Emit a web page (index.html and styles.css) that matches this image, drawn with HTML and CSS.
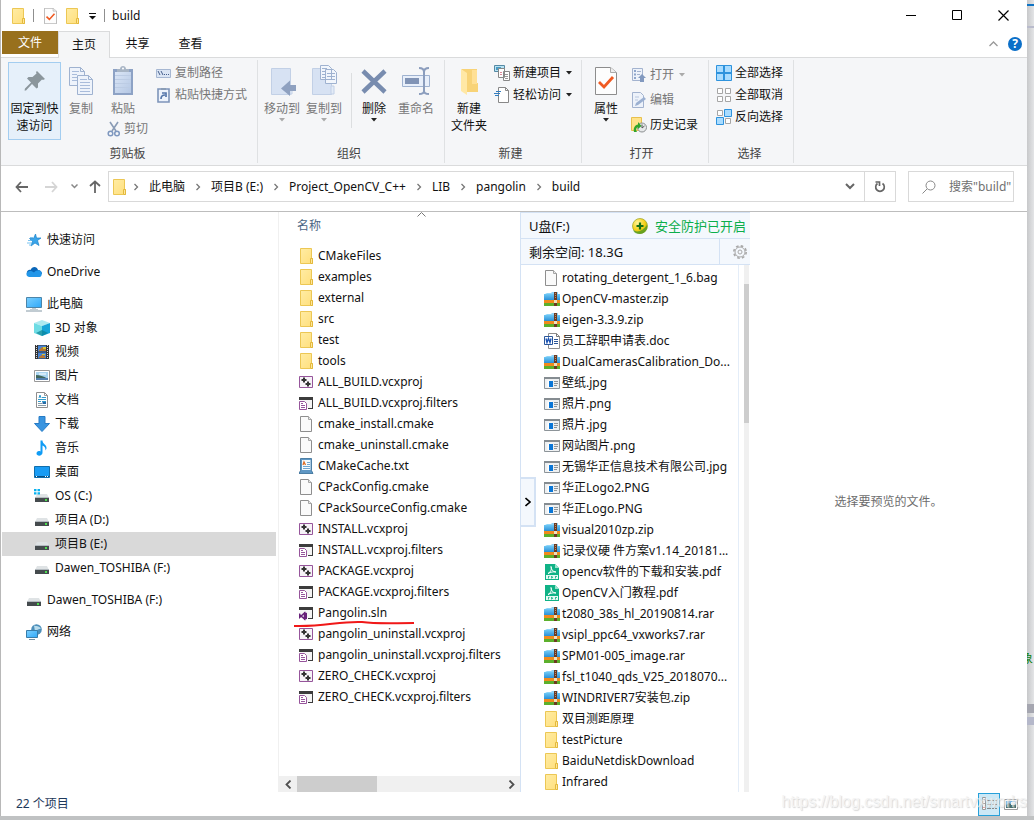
FILE: index.html
```
<!DOCTYPE html>
<html lang="zh-CN">
<head>
<meta charset="utf-8">
<title>build</title>
<link rel="stylesheet" href="styles.css">
</head>
<body>
<svg class="sprite" aria-hidden="true">
  <defs>
    <linearGradient id="g-folder" x1="0" y1="0" x2="1" y2="1"><stop offset="0" stop-color="#ffeca4"/><stop offset="1" stop-color="#ffdf7c"/></linearGradient>
    <linearGradient id="g-screen" x1="0" y1="0" x2="1" y2="1"><stop offset="0" stop-color="#7cd0ff"/><stop offset="1" stop-color="#2fa8f8"/></linearGradient>
    <linearGradient id="g-board" x1="0" y1="0" x2="1" y2="1"><stop offset="0" stop-color="#dbe6f6"/><stop offset="1" stop-color="#b4c7e4"/></linearGradient>
    <linearGradient id="g-zip" x1="0" y1="0" x2="0" y2="1"><stop offset="0" stop-color="#6ec8f5"/><stop offset="1" stop-color="#1f86d2"/></linearGradient>
    <radialGradient id="g-gold" cx=".35" cy=".3" r=".8"><stop offset="0" stop-color="#fff59a"/><stop offset=".6" stop-color="#f5cf14"/><stop offset="1" stop-color="#8fa817"/></radialGradient>
  </defs>
  <symbol id="folder" viewBox="0 0 16 16"><path d="M1.500.5h11v10h1v5h-12z" fill="url(#g-folder)" stroke="#ecc754"/><path d="M11.500 15v-4.500h2v5h-2" fill="#ffe69a" stroke="#e3b93c"/></symbol>
  <symbol id="page" viewBox="0 0 16 16"><path d="M1.500.5h8l3 3v12h-11z" fill="#fafafa" stroke="#8e8e8e"/><path d="M9.500.5v3h3" fill="#e8e8e8" stroke="#a5a5a5"/></symbol>
  <symbol id="proj" viewBox="0 0 16 16"><path d="M.5 2.500h13v11H.5z" fill="#f6f2f7" stroke="#96559b"/><path d="M5 3.500v5M2.500 6h5M9 7.500v5M6.500 10h5" stroke="#333" stroke-width="2"/></symbol>
  <symbol id="filters" viewBox="0 0 16 16"><path d="M0 2h14v12H9v-1h4V5H0z" fill="#3c3c3c"/><path d="M1 5h12v8H1z" fill="#f4f4f4"/><path d="M.5 6.500h5l2 2v6h-7z" fill="#fff" stroke="#96559b"/><path d="M2 10.500h4M2 12.500h4M2 8.500h2" stroke="#96559b"/></symbol>
  <symbol id="sln" viewBox="0 0 16 16"><path d="M0 2h14v12H9v-1h4V5H0z" fill="#3c3c3c"/><path d="M1 5h12v8H1z" fill="#f4f4f4"/><path d="M.5 8.500v4L5.500 8v6l-5-4.500" fill="none" stroke="#68217a" stroke-width="1.500"/><path d="M5 7l3 1v6l-3 1z" fill="#68217a"/></symbol>
  <symbol id="txt" viewBox="0 0 16 16"><path d="M1.500.500h11v12l1.500 3H0l1.500-3z" fill="#5f97c4" stroke="#346b96" stroke-width=".8"/><path d="M3 2h8.500v10H3z" fill="#f5fbff"/><path d="M4 7l1-3 1.500 3" fill="none" stroke="#e06c24" stroke-width="1.300"/><path d="M8 4.500h3M8 6.500h3M4 8.500h7M4 10.500h7" stroke="#72a7d1"/></symbol>
  <symbol id="zip" viewBox="0 0 16 16"><path d="M1 3l2-1h4l1-1h6v4H1z" fill="#8fd4f8"/><path d="M0 3h16v7H0z" fill="url(#g-zip)"/><path d="M0 9h16v3H0z" fill="#f08a1c"/><path d="M0 12h16v3H0z" fill="#5cb02c"/><path d="M10 1h3v14h-3z" fill="#6b3a22"/><path d="M11.500 2v6" stroke="#b98f6f" stroke-dasharray="1 1"/><path d="M10 9h3v3h-3z" fill="#efe0bc"/></symbol>
  <symbol id="doc" viewBox="0 0 16 16"><path d="M4.500.5h8l3 3v12h-11z" fill="#fff" stroke="#8e8e8e"/><path d="M12.500.5v3h3" fill="none" stroke="#777"/><path d="M10 6.500h4M10 8.500h4M10 10.500h4" stroke="#2b579a"/><path d="M.5 3.500h8v8h-8z" fill="#fff" stroke="#2b579a"/><path d="M2 5.500l1 4 1.500-4 1.500 4 1-4" fill="none" stroke="#1d55b4" stroke-width="1.400"/></symbol>
  <symbol id="img" viewBox="0 0 16 16"><path d="M.5 2.500h15v11H.5z" fill="#eef0f1" stroke="#8d9499"/><path d="M0 2h16v2H0z" fill="#858c91"/><path d="M3.500 5.500h5v7h-5z" fill="#fff"/><path d="M5 6h4v6H5z" fill="#0a76d6"/><path d="M10 6.500h4M10 8.500h4M10 10.500h3" stroke="#8d9499"/></symbol>
  <symbol id="pdf" viewBox="0 0 16 16"><path d="M1 0h10l4 4v12H1z" fill="#10b286"/><path d="M11 0v4h4z" fill="#9be3cd"/><path d="M4 9.500c3-1.500 4-5 3-7 0 3 2 5.500 5 5.500-3-.5-5 0-8 1.500z" fill="none" stroke="#fff"/><path d="M2 11h12v4H2z" fill="#e6f8f2"/><path d="M4.500 12v2.500M4 12.500h1.500M7.500 12v2.500M8.500 12.500v1.500M11.500 12v2.500M11 12.500h2" stroke="#3bbd98"/></symbol>
  <symbol id="star" viewBox="0 0 16 16"><path d="M9.500 2l1 4H15l-3.500 2.500L13 13.500 9 11l-4 3 1.500-4.500L3.500 6.500h4z" fill="#3aa5ea" stroke="#1a82ca" stroke-width=".7"/><path d="M4 5.500h3M2 8.500h4M1 11h5M3 13h3" stroke="#59b5ee" stroke-width=".8"/></symbol>
  <symbol id="cloud" viewBox="0 0 16 16"><path d="M2 12C-1 9 2 5 4.500 6 6 2 11 2 12 6c2 0 4 1.500 4 4z" fill="#0a66b8"/><path d="M3 13c-3-.5-3.500-4-.5-5.500 2-1 4 0 5.500 1 1.500-1.500 3.500-2.500 5.500-2 3 1 3 6 0 6.500z" fill="#2296e8"/></symbol>
  <symbol id="pc" viewBox="0 0 16 16"><path d="M.5 1.500h15v10H.5z" fill="url(#g-screen)" stroke="#4c85a9"/><path d="M6 12.500h4M4 13.500h8" stroke="#c2ccd2"/><path d="M0 15h16" stroke="#8398a5"/></symbol>
  <symbol id="cube" viewBox="0 0 16 16"><path d="M0 3l8-3 8 3-8 3z" fill="#aeeaf0"/><path d="M0 3l8 3v10l-8-3z" fill="#6edce4"/><path d="M16 3L8 6v10l8-3z" fill="#18a5d8"/><path d="M2 13l6-3 6 3-6 3z" fill="#0a8396" opacity=".7"/></symbol>
  <symbol id="film" viewBox="0 0 16 16"><path d="M1 1h14v14H1z" fill="#333"/><path d="M4 1.500h8v6H4zM4 8.500h8v6H4z" fill="#4784d3"/><path d="M5 6l3-3 4 2v2H5zM5 13l3-2 3 1v2H5z" fill="#bb772f"/><path d="M9 3h3v2H9zM8 10h3v1H8z" fill="#dbc52d"/><path d="M2.500 1v14M13.500 1v14" stroke="#ddd" stroke-dasharray="1 1"/></symbol>
  <symbol id="photo" viewBox="0 0 16 16"><path d="M.5 2.500h15v11H.5z" fill="#fff" stroke="#999"/><path d="M2 4h12v8H2z" fill="#a9d4ef"/><path d="M2 7c4 0 7 1 12 4v1H2z" fill="#40675c"/><path d="M2 10h12v2H2z" fill="#537fae"/><path d="M5 6h7" stroke="#fff"/></symbol>
  <symbol id="document" viewBox="0 0 16 16"><path d="M2.500.5h8l3 3v12h-11z" fill="#fff" stroke="#8e8e8e"/><path d="M10.500.5v3h3" fill="none" stroke="#999"/><path d="M5 6l1-3 1 3M8 5.500h4M4 7.500h8M4 9.500h3M8 9.500h4" fill="none" stroke="#329acb"/><path d="M4 11.500h4M4 13.500h8" stroke="#889ba6"/><path d="M8.500 10h3.500v2H8.500z" fill="#286aa7"/></symbol>
  <symbol id="down" viewBox="0 0 16 16"><path d="M5 .5h6v7h4.500L8 15.500.5 7.500H5z" fill="#3894e0" stroke="#267bc5"/></symbol>
  <symbol id="note" viewBox="0 0 16 16"><path d="M6.500.5h2c0 4 4.500 4 4 8l-1 2c0-3-1-4-3-5v7c0 4-6 4-6 1 0-2 2-3 4-2z" fill="#109cf5"/></symbol>
  <symbol id="desktop" viewBox="0 0 16 16"><path d="M.5 2.500h15v11H.5z" fill="#199cf4" stroke="#106eac"/><path d="M1 12.500h14" stroke="#084f83"/><path d="M2 12.500h1M11 12.500h1M13 12.500h1" stroke="#fff"/></symbol>
  <symbol id="drive" viewBox="0 0 16 16"><path d="M3 6h10l2 4H1z" fill="#dfe3e5"/><path d="M1 10h14v4H1z" fill="#454b4e"/><path d="M1 9.500h14" stroke="#b4bbc0"/><path d="M11 12h2" stroke="#4cde4f" stroke-width="2"/></symbol>
  <symbol id="osdrive" viewBox="0 0 16 16"><use href="#drive"/><path d="M0 1h2.500v2.200H0zM3.500 1H6v2.200H3.500zM0 4.200h2.500v2.200H0zM3.500 4.200H6v2.200H3.500z" fill="#08b1ef"/></symbol>
  <symbol id="network" viewBox="0 0 16 16"><circle cx="10.500" cy="5.500" r="5.300" fill="#4d8fba"/><path d="M8 1.500c2 1 5 0 7 3l-3 1-3 2z" fill="#b8dced"/><path d="M.5 6.500h11v7H.5z" fill="url(#g-screen)" stroke="#387ca9"/><path d="M3 15.500h6" stroke="#7390a3"/></symbol>
  <symbol id="check" viewBox="0 0 22 28"><path d="M.5.5h15l6 5v22H.5z" fill="#fdfdfd" stroke="#8d8d8d"/><path d="M15.500.5v5h6" fill="#eee" stroke="#aaa"/><path d="M4 15l5 5 9-10" fill="none" stroke="#f05a22" stroke-width="2.800"/></symbol>
  <symbol id="arrow-down" viewBox="0 0 8 4"><path d="M1 0h6L4 3.500z" fill="currentColor"/></symbol>
  <symbol id="chev" viewBox="0 0 8 8"><path d="M2.500 1l3 3-3 3" fill="none" stroke="currentColor" stroke-width="1.300"/></symbol>
</svg>

<div class="window">
  <header class="titlebar">
    <svg class="i16"><use href="#folder"/></svg>
    <span class="bar"></span>
    <button class="plain" aria-label="属性"><svg class="i-check"><use href="#check"/></svg></button>
    <button class="plain" aria-label="新建文件夹"><svg class="i16"><use href="#folder"/></svg></button>
    <button class="plain custom" aria-label="自定义快速访问工具栏"><svg width="8" height="8" viewBox="0 0 8 8"><path d="M0 1.500h7" stroke="#111"/><path d="M0 4h7L3.500 7.500z" fill="#111"/></svg></button>
    <span class="bar"></span>
    <h1 class="title">build</h1>
    <div class="winbuttons">
      <button class="plain" aria-label="最小化"><svg width="11" height="11"><path d="M0 5.500h10" stroke="#000"/></svg></button>
      <button class="plain" aria-label="最大化"><svg width="11" height="11"><path d="M.5.5h9v9h-9z" fill="none" stroke="#000"/></svg></button>
      <button class="plain" aria-label="关闭"><svg width="11" height="11"><path d="M.5.5l10 10M10.500.5l-10 10" stroke="#000" stroke-width="1.200"/></svg></button>
    </div>
  </header>

  <nav class="tabs">
    <button class="tab file">文件</button>
    <button class="tab active">主页</button>
    <button class="tab">共享</button>
    <button class="tab">查看</button>
    <div class="tabs-end">
      <button class="plain" aria-label="最小化功能区"><svg width="9" height="6"><path d="M.5 5l4-4 4 4" fill="none" stroke="#999" stroke-width="1.300"/></svg></button>
      <button class="plain help" aria-label="帮助">?</button>
    </div>
  </nav>

  <section class="ribbon">
    <div class="group clip">
      <div class="tools">
        <button class="big pinned"><svg width="24" height="32" viewBox="0 0 24 32"><path d="M14 6l8 8-2 1-1-.500-4 4 0 4-1.500 1-4.500-4.500-6 6.500-1.500 0 .5-2 6-6-4-4 1.500-1.500h4l4-3.500-.5-1.500z" fill="#8b969c"/></svg><span>固定到快<br>速访问</span></button>
        <button class="big copy off"><svg width="26" height="32" viewBox="0 0 26 32"><g fill="#eef3fb" stroke="#9fb2d0"><path d="M1.500 2.500h11l4 4v14h-15z"/><path d="M9.500 10.500h11l4 4v15h-15z"/></g><path d="M12.500 2.500v4h4M20.500 10.500v4h4" fill="none" stroke="#9fb2d0"/><path d="M4 6.500h7M4 9.500h5M4 12.500h5M4 15.500h5M12 14.500h7M12 17.500h10M12 20.500h10M12 23.500h10M12 26.500h10" stroke="#a9bcdb"/></svg><span>复制</span></button>
        <div class="pastecol">
          <button class="big paste off"><svg width="22" height="32" viewBox="0 0 22 32"><path d="M1 4h20v26H1z" fill="#8da2c5"/><path d="M3 7h16v21H3z" fill="url(#g-board)"/><path d="M3 10.500h16M3 14.500h16M3 18.500h16M3 22.500h16" stroke="#bccce4"/><path d="M5 7V4h3c0-4 6-4 6 0h3v3z" fill="#a8b5c5"/><circle cx="11" cy="3.500" r="1" fill="#fff"/></svg><span>粘贴</span></button>
          <button class="small off"><svg class="i16" viewBox="0 0 16 16"><path d="M4 1l6 9M12 1L6 10" stroke="#899bb5" stroke-width="1.600"/><circle cx="4.500" cy="12.500" r="2.300" fill="none" stroke="#7f98bf" stroke-width="1.500"/><circle cx="11" cy="12.500" r="2.300" fill="none" stroke="#7f98bf" stroke-width="1.500"/></svg>剪切</button>
        </div>
        <div class="smalls">
          <button class="small off"><svg class="i16" viewBox="0 0 16 16"><path d="M.5 4.500h14v8H.5z" fill="#dbe5f4" stroke="#a6b7d2"/><path d="M2 6l2 4M5 6l2 4M8 9.500h1M10 9.500h1M12 9.500h1" stroke="#465f8d"/></svg>复制路径</button>
          <button class="small off"><svg class="i16" viewBox="0 0 16 16"><path d="M2 2h11v13H2z" fill="#edf3fc" stroke="#7d94b9" stroke-width="1.600"/><path d="M5 3V1h5v2z" fill="#8b9db6"/><path d="M5 12c0-3 1-4 4-4M6 6h4v4" fill="none" stroke="#5577ab" stroke-width="1.700"/></svg>粘贴快捷方式</button>
        </div>
      </div>
      <h2>剪贴板</h2>
    </div>

    <div class="group organize">
      <div class="tools">
        <button class="big off"><svg width="28" height="32" viewBox="0 0 28 32"><path d="M3.500 3.500h19v26h-19z" fill="#d7e2f3" stroke="#c2d0e6"/><path d="M22 21h2v8h-2z" fill="#e3ebf7" stroke="#c2d0e6"/><path d="M13 23.500l9-8V20h6v6h-6v5z" fill="#8fa1c0"/></svg><span>移动到</span><svg class="dd"><use href="#arrow-down"/></svg></button>
        <button class="big off"><svg width="28" height="32" viewBox="0 0 28 32"><path d="M2.500 3.500h19v26h-19z" fill="#d7e2f3" stroke="#c2d0e6"/><path d="M21 21h3v8h-3z" fill="#e3ebf7" stroke="#c2d0e6"/><path d="M10.500.5h8l3 3v11h-11zM15.500 4.500h8l3 3v11h-11z" fill="#f2f6fc" stroke="#9fb2d0"/><path d="M12 3.500h5M12 6.500h3M12 9.500h3M12 12.500h3M17 8.500h8M17 11.500h8M17 14.500h8" stroke="#9fb2d0"/></svg><span>复制到</span><svg class="dd"><use href="#arrow-down"/></svg></button>
        <span class="divider"></span>
        <button class="big"><svg width="28" height="32" viewBox="0 0 28 32"><path d="M3 6l22 21M25 6L3 27" stroke="#788caf" stroke-width="4.500"/></svg><span>删除</span><svg class="dd"><use href="#arrow-down"/></svg></button>
        <button class="big off"><svg width="30" height="32" viewBox="0 0 30 32"><path d="M1.500 10.500h27v11h-27z" fill="#e8effa" stroke="#9fb2d0"/><path d="M4 13h14v6H4z" fill="#8093b5"/><path d="M18 3c3 0 5 1 5 4v19c0 2-2 3-5 3M28 3c-3 0-5 1-5 4M23 26c0 2 2 3 5 3" fill="none" stroke="#8b9dbd" stroke-width="2"/></svg><span>重命名</span></button>
      </div>
      <h2>组织</h2>
    </div>

    <div class="group create">
      <div class="tools">
        <button class="big newfolder"><svg width="26" height="32" viewBox="0 0 26 32"><path d="M5 4h16v14h1v9H9V8z" fill="#f8d377"/><path d="M5 4l6 4v22l-6-4z" fill="#ffe8a6"/><path d="M16 5h5v14h-5z" fill="#ffe095"/></svg><span>新建<br>文件夹</span></button>
        <div class="smalls">
          <button class="small"><svg class="i16" viewBox="0 0 16 16"><path d="M.5.500h10v6H.5z" fill="#b9e3f3" stroke="#5589a4"/><path d="M2 2h5v3H2z" fill="#4a9cc4"/><path d="M4.500 3.500h6v9h-6zM9.500 6.500h6v9h-6z" fill="#fff" stroke="#888"/><path d="M11 9.500h3M11 11.500h3M11 13.500h3" stroke="#999"/><path d="M6 7.500h2M6 9.500h2" stroke="#d89"/></svg>新建项目<svg class="dd"><use href="#arrow-down"/></svg></button>
          <button class="small"><svg class="i16" viewBox="0 0 16 16"><path d="M4.500.5h7l3 3v12h-10z" fill="#fff" stroke="#888"/><path d="M11.500.5v3h3" fill="none" stroke="#888"/><path d="M0 6.500h6M2 4.500h5M1 8.500h4" stroke="#337dc0"/></svg>轻松访问<svg class="dd"><use href="#arrow-down"/></svg></button>
        </div>
      </div>
      <h2>新建</h2>
    </div>

    <div class="group open">
      <div class="tools">
        <button class="big"><svg width="22" height="32" viewBox="0 0 22 32"><use href="#check" y="2" width="22" height="28"/></svg><span>属性</span><svg class="dd"><use href="#arrow-down"/></svg></button>
        <div class="smalls tall">
          <button class="small off"><svg class="i16" viewBox="0 0 16 16"><path d="M1.500 1.500h10v12h-10z" fill="#edf2fa" stroke="#a3b3cf"/><path d="M3 3h2v2H3zM3 6.500h2v2H3zM3 10h2v2H3z" fill="#8fa6cb"/><path d="M6 4.500h4M6 7.500h3" stroke="#a3b3cf"/><path d="M9 15v-4H7l4-4 4 4h-2v4z" fill="#8299bf"/></svg>打开<svg class="dd"><use href="#arrow-down"/></svg></button>
          <button class="small off"><svg class="i16" viewBox="0 0 16 16"><path d="M1.500.5h8l3 3v12h-11z" fill="#edf2fa" stroke="#a3b3cf"/><path d="M4 14l1-3 8-6 2 2-8 6z" fill="#9bb0d1"/><path d="M4 5h4M4 8h3" stroke="#b8c6dd"/></svg>编辑</button>
          <button class="small"><svg class="i16" viewBox="0 0 16 16"><path d="M.5.500h10v13H.5z" fill="#ffe38a" stroke="#e8c04d"/><circle cx="11" cy="10.500" r="4.500" fill="#e7e9ea" stroke="#8b8f91"/><path d="M11 7.500v3.500l2.500-2" fill="none" stroke="#555"/><path d="M3 15c-1-4 1-7 4-7.500V5l3.500 4L7 12v-2c-2 .5-2.500 3-1 5z" fill="#30a62b"/></svg>历史记录</button>
        </div>
      </div>
      <h2>打开</h2>
    </div>

    <div class="group select">
      <div class="tools">
        <div class="smalls">
          <button class="small"><svg class="i16" viewBox="0 0 16 16"><path d="M.5.500h15v15H.5z" fill="#a9dcff" stroke="#2e93dd"/><path d="M8 0v16M0 8h16" stroke="#2e93dd" stroke-width="2"/></svg>全部选择</button>
          <button class="small"><svg class="i16" viewBox="0 0 16 16"><path d="M1.500 1.500h5v5h-5zM9.500 1.500h5v5h-5zM1.500 9.500h5v5h-5zM9.500 9.500h5v5h-5z" fill="#fff" stroke="#a6a6a6"/></svg>全部取消</button>
          <button class="small"><svg class="i16" viewBox="0 0 16 16"><path d="M1.500 1.500h5v5h-5zM9.500 9.500h5v5h-5z" fill="#fff" stroke="#a6a6a6"/><path d="M8.500.500h7v7h-7zM.5 8.500h7v7h-7z" fill="#a9dcff" stroke="#2e93dd"/></svg>反向选择</button>
        </div>
      </div>
      <h2>选择</h2>
    </div>
  </section>

  <section class="addressrow">
    <button class="plain nav-btn" aria-label="后退"><svg width="13" height="12"><path d="M6 1L1.500 6 6 11M1.500 6H13" fill="none" stroke="#666" stroke-width="1.800"/></svg></button>
    <button class="plain nav-btn" aria-label="前进"><svg width="13" height="12"><path d="M7 1l4.500 5L7 11M11.500 6H0" fill="none" stroke="#d5d5d5" stroke-width="1.800"/></svg></button>
    <button class="plain recent" aria-label="最近位置"><svg width="7" height="5"><path d="M.5.500l3 3 3-3" fill="none" stroke="#888" stroke-width="1.500"/></svg></button>
    <button class="plain up" aria-label="上移"><svg width="12" height="13"><path d="M1 6l5-4.500L11 6M6 1.500V13" fill="none" stroke="#666" stroke-width="1.800"/></svg></button>
    <div class="address">
      <svg class="i16"><use href="#folder"/></svg>
      <ol class="crumbs">
        <li><svg class="chev"><use href="#chev"/></svg><a href="#">此电脑</a></li>
        <li><svg class="chev"><use href="#chev"/></svg><a href="#">项目B (E:)</a></li>
        <li><svg class="chev"><use href="#chev"/></svg><a href="#">Project_OpenCV_C++</a></li>
        <li><svg class="chev"><use href="#chev"/></svg><a href="#">LIB</a></li>
        <li><svg class="chev"><use href="#chev"/></svg><a href="#">pangolin</a></li>
        <li><svg class="chev"><use href="#chev"/></svg><a href="#">build</a></li>
      </ol>
      <button class="plain history" aria-label="以前的位置"><svg width="10" height="7"><path d="M1 1l4 4 4-4" fill="none" stroke="#666" stroke-width="2"/></svg></button>
      <button class="plain refresh" aria-label="刷新"><svg width="12" height="13"><path d="M8.500 3.500a4.300 4.300 0 1 1-5 0M1.500 2h4v4" fill="none" stroke="#666" stroke-width="1.700"/></svg></button>
    </div>
    <label class="search"><svg width="14" height="14"><circle cx="8.500" cy="5.500" r="4.500" fill="none" stroke="#888"/><path d="M5 9l-4.500 4.500" stroke="#888"/></svg><input type="text" placeholder="搜索&quot;build&quot;" aria-label="搜索"></label>
  </section>

  <main class="content">
    <nav class="tree">
      <a href="#"><svg class="i16"><use href="#star"/></svg>快速访问</a>
      <a href="#" class="gap"><svg class="i16"><use href="#cloud"/></svg>OneDrive</a>
      <a href="#" class="gap"><svg class="i16"><use href="#pc"/></svg>此电脑</a>
      <a href="#" class="child"><svg class="i16"><use href="#cube"/></svg>3D 对象</a>
      <a href="#" class="child"><svg class="i16"><use href="#film"/></svg>视频</a>
      <a href="#" class="child"><svg class="i16"><use href="#photo"/></svg>图片</a>
      <a href="#" class="child"><svg class="i16"><use href="#document"/></svg>文档</a>
      <a href="#" class="child"><svg class="i16"><use href="#down"/></svg>下载</a>
      <a href="#" class="child"><svg class="i16"><use href="#note"/></svg>音乐</a>
      <a href="#" class="child"><svg class="i16"><use href="#desktop"/></svg>桌面</a>
      <a href="#" class="child"><svg class="i16"><use href="#osdrive"/></svg>OS (C:)</a>
      <a href="#" class="child"><svg class="i16"><use href="#drive"/></svg>项目A (D:)</a>
      <a href="#" class="child current"><svg class="i16"><use href="#drive"/></svg>项目B (E:)</a>
      <a href="#" class="child"><svg class="i16"><use href="#drive"/></svg>Dawen_TOSHIBA (F:)</a>
      <a href="#" class="gap"><svg class="i16"><use href="#drive"/></svg>Dawen_TOSHIBA (F:)</a>
      <a href="#" class="gap"><svg class="i16"><use href="#network"/></svg>网络</a>
    </nav>

    <section class="files">
      <button class="plain colhead"><svg class="sort" width="9" height="5"><path d="M.5 4.500l4-4 4 4" fill="none" stroke="#777"/></svg>名称</button>
      <ul class="list">
        <li><svg class="i16"><use href="#folder"/></svg>CMakeFiles</li>
        <li><svg class="i16"><use href="#folder"/></svg>examples</li>
        <li><svg class="i16"><use href="#folder"/></svg>external</li>
        <li><svg class="i16"><use href="#folder"/></svg>src</li>
        <li><svg class="i16"><use href="#folder"/></svg>test</li>
        <li><svg class="i16"><use href="#folder"/></svg>tools</li>
        <li><svg class="i16"><use href="#proj"/></svg>ALL_BUILD.vcxproj</li>
        <li><svg class="i16"><use href="#filters"/></svg>ALL_BUILD.vcxproj.filters</li>
        <li><svg class="i16"><use href="#page"/></svg>cmake_install.cmake</li>
        <li><svg class="i16"><use href="#page"/></svg>cmake_uninstall.cmake</li>
        <li><svg class="i16"><use href="#txt"/></svg>CMakeCache.txt</li>
        <li><svg class="i16"><use href="#page"/></svg>CPackConfig.cmake</li>
        <li><svg class="i16"><use href="#page"/></svg>CPackSourceConfig.cmake</li>
        <li><svg class="i16"><use href="#proj"/></svg>INSTALL.vcxproj</li>
        <li><svg class="i16"><use href="#filters"/></svg>INSTALL.vcxproj.filters</li>
        <li><svg class="i16"><use href="#proj"/></svg>PACKAGE.vcxproj</li>
        <li><svg class="i16"><use href="#filters"/></svg>PACKAGE.vcxproj.filters</li>
        <li class="marked"><svg class="i16"><use href="#sln"/></svg>Pangolin.sln<svg class="redline" viewBox="0 0 122 8"><path d="M1 6c30 1 45-5 68-4 15 2 30 1 52 1" fill="none" stroke="#f01818" stroke-width="2"/></svg></li>
        <li><svg class="i16"><use href="#proj"/></svg>pangolin_uninstall.vcxproj</li>
        <li><svg class="i16"><use href="#filters"/></svg>pangolin_uninstall.vcxproj.filters</li>
        <li><svg class="i16"><use href="#proj"/></svg>ZERO_CHECK.vcxproj</li>
        <li><svg class="i16"><use href="#filters"/></svg>ZERO_CHECK.vcxproj.filters</li>
      </ul>
      <div class="hscroll">
        <button class="plain" aria-label="向左滚动"><svg width="7" height="9"><path d="M5.500.5l-4 4 4 4" fill="none" stroke="#505050" stroke-width="1.800"/></svg></button>
        <div class="track"><div class="thumb"></div></div>
        <button class="plain" aria-label="向右滚动"><svg width="7" height="9"><path d="M1.500.5l4 4-4 4" fill="none" stroke="#505050" stroke-width="1.800"/></svg></button>
      </div>
    </section>

    <aside class="usb">
      <div class="usb-head"><span>U盘(F:)</span><svg class="i16" viewBox="0 0 16 16"><circle cx="8" cy="8" r="7.500" fill="url(#g-gold)" stroke="#9aa322" stroke-width=".7"/><path d="M1 12c4 3 10 1 14-5 1 5-3 9-7 9-3 0-6-1-7-4z" fill="#4f9b22" opacity=".75"/><path d="M8 4.500v7M4.500 8h7" stroke="#167116" stroke-width="2.200"/></svg><span class="safe">安全防护已开启</span></div>
      <div class="usb-space"><span>剩余空间: 18.3G</span><button class="plain gear" aria-label="设置"><svg width="16" height="16" viewBox="0 0 16 16"><circle cx="8" cy="8" r="6.200" fill="none" stroke="#a8a8a8" stroke-width="1.600" stroke-dasharray="2.600 2.270"/><circle cx="8" cy="8" r="5" fill="#f4f8fd" stroke="#a8a8a8"/><circle cx="8" cy="8" r="2" fill="none" stroke="#a8a8a8"/></svg></button></div>
      <div class="usb-body">
        <ul class="list">
          <li><svg class="i16"><use href="#page"/></svg>rotating_detergent_1_6.bag</li>
          <li><svg class="i16"><use href="#zip"/></svg>OpenCV-master.zip</li>
          <li><svg class="i16"><use href="#zip"/></svg>eigen-3.3.9.zip</li>
          <li><svg class="i16"><use href="#doc"/></svg>员工辞职申请表.doc</li>
          <li><svg class="i16"><use href="#zip"/></svg>DualCamerasCalibration_Do...</li>
          <li><svg class="i16"><use href="#img"/></svg>壁纸.jpg</li>
          <li><svg class="i16"><use href="#img"/></svg>照片.png</li>
          <li><svg class="i16"><use href="#img"/></svg>照片.jpg</li>
          <li><svg class="i16"><use href="#img"/></svg>网站图片.png</li>
          <li><svg class="i16"><use href="#img"/></svg>无锡华正信息技术有限公司.jpg</li>
          <li><svg class="i16"><use href="#img"/></svg>华正Logo2.PNG</li>
          <li><svg class="i16"><use href="#img"/></svg>华正Logo.PNG</li>
          <li><svg class="i16"><use href="#zip"/></svg>visual2010zp.zip</li>
          <li><svg class="i16"><use href="#zip"/></svg>记录仪硬 件方案v1.14_20181...</li>
          <li><svg class="i16"><use href="#pdf"/></svg>opencv软件的下载和安装.pdf</li>
          <li><svg class="i16"><use href="#pdf"/></svg>OpenCV入门教程.pdf</li>
          <li><svg class="i16"><use href="#zip"/></svg>t2080_38s_hl_20190814.rar</li>
          <li><svg class="i16"><use href="#zip"/></svg>vsipl_ppc64_vxworks7.rar</li>
          <li><svg class="i16"><use href="#zip"/></svg>SPM01-005_image.rar</li>
          <li><svg class="i16"><use href="#zip"/></svg>fsl_t1040_qds_V25_2018070...</li>
          <li><svg class="i16"><use href="#zip"/></svg>WINDRIVER7安装包.zip</li>
          <li><svg class="i16"><use href="#folder"/></svg>双目测距原理</li>
          <li><svg class="i16"><use href="#folder"/></svg>testPicture</li>
          <li><svg class="i16"><use href="#folder"/></svg>BaiduNetdiskDownload</li>
          <li><svg class="i16"><use href="#folder"/></svg>Infrared</li>
        </ul>
        <div class="vscroll"><div class="vthumb"></div></div>
      </div>
      <button class="collapse" aria-label="收起"><svg width="6" height="10"><path d="M.5 1L5 5 .5 9" fill="none" stroke="#000" stroke-width="1.600"/></svg></button>
    </aside>

    <section class="preview">选择要预览的文件。</section>
  </main>

  <footer class="status">
    <span class="count">22 个项目</span>
    <button class="view on" aria-label="详细信息"><svg width="17" height="14"><path d="M1.500.5h3v12h-3z" fill="#fff" stroke="#999"/><path d="M3 2v1M3 6v1" stroke="#555"/><path d="M3 10v1" stroke="#d33"/><path d="M6 3.500h10M6 7.500h10M6 11.500h10" stroke="#888" stroke-dasharray="4 1 2 1"/></svg></button>
    <button class="view" aria-label="大图标"><svg width="14" height="11"><path d="M.5.500h13v10H.5z" fill="#fff" stroke="#999"/><path d="M2 2h10v7H2z" fill="#78b2e2"/><path d="M2 6l3-2 3 2 4-1v4H2z" fill="#466c68"/><path d="M7 3h4v3H7z" fill="#eef5f8"/></svg></button>
    <span class="watermark">https://blog.csdn.net/smartvxworks</span>
  </footer>
</div>

<div class="behind" aria-hidden="true"><i class="strip blue"></i><i class="strip top"></i><span class="glyph">象</span><i class="strip mid"></i><i class="strip low"></i></div>
</body>
</html>
```
FILE: styles.css
```
* { box-sizing: border-box; }

body {
  margin: 0;
  display: grid;
  grid-template-columns: minmax(0, 1fr) 7px;
  height: 100vh;
  padding-bottom: 4px;
  overflow: hidden;
  background: #c0c2c3;
  color: #111;
  font: 12px/16px "Noto Sans", "Noto Sans CJK SC", sans-serif;
}

button, input {
  margin: 0;
  padding: 0;
  border: 0;
  background: none;
  color: inherit;
  font: inherit;
}

a { color: inherit; text-decoration: none; }
ul, ol { margin: 0; padding: 0; list-style: none; }
h1, h2 { margin: 0; font-size: 12px; font-weight: 400; }
svg { display: block; flex: none; }
.sprite { position: absolute; width: 0; height: 0; }
.i16 { width: 16px; height: 16px; }
.plain { display: flex; align-items: center; justify-content: center; }

.window {
  display: flex;
  flex-direction: column;
  min-width: 0;
  min-height: 0;
  border-left: 1px solid #b8b8b8;
  background: #fff;
}

/* Title bar */
.titlebar { display: flex; align-items: center; height: 31px; padding-left: 10px; }
.bar { width: 1px; height: 13px; margin: 0 10px 0 6px; background: #8f8f8f; }
.i-check { width: 13px; height: 16px; }
.titlebar .plain + .plain { margin-left: 8px; }
.titlebar .custom { width: 8px; margin-left: 6px; }
.custom + .bar { margin: 0 7px; }
.winbuttons { display: flex; align-self: stretch; margin-left: auto; margin-right: 1px; }
.winbuttons .plain { width: 46px; }
.titlebar .winbuttons .plain { margin-left: 0; }

/* Tabs */
.tabs {
  display: flex;
  height: 27px;
  padding-left: 1px;
  border-bottom: 1px solid #dadbdc;
}
.tab { width: 53px; }
.tab.file { width: 56px; height: 23px; background: #98701d; color: #fff; }
.tab.active {
  width: 52px;
  height: 27px;
  margin-right: 1px;
  border: 1px solid #dadbdc;
  border-bottom: 0;
  background: #f5f6f7;
}
.tabs-end { display: flex; align-items: center; gap: 10px; margin-left: auto; padding-right: 5px; }
.help {
  width: 14px;
  height: 14px;
  border-radius: 50%;
  background: #0b6fc8;
  color: #fff;
  font-weight: 700;
}

/* Ribbon */
.ribbon {
  display: flex;
  padding: 2px 0;
  border-bottom: 1px solid #dadbdc;
  background: #f5f6f8;
}
.group {
  display: flex;
  flex-direction: column;
  padding: 2px 10px 0 7px;
  border-right: 1px solid #dfe1e3;
}
.group h2 { padding-bottom: 1px; color: #444; text-align: center; }
.tools { display: flex; height: 84px; }
.big {
  display: flex;
  flex-direction: column;
  align-items: center;
  width: 42px;
  padding-top: 3px;
  line-height: 17px;
}
.big span { padding-top: 3px; white-space: nowrap; }
.dd { width: 8px; height: 4px; color: #222; }
.big .dd { margin-top: 1px; }
.off { color: #777; }
.off .dd { color: #aaa; }
.big.pinned { width: 53px; height: 78px; padding-top: 2px; border: 1px solid #a3cdf0; background: #e6f0fa; }
.big.copy { width: 40px; }
.pastecol { width: 50px; }
.big.paste { width: 44px; }
.small { display: flex; align-items: center; gap: 3px; height: 22px; white-space: nowrap; }
.small .dd { margin-left: 1px; }
.pastecol .small { width: 44px; height: 16px; margin: 0 0 0 5px; gap: 2px; }
.pastecol .paste { height: 59px; }
.smalls { display: flex; flex-direction: column; padding: 0 0 0 5px; }
.divider { width: 1px; height: 55px; margin: 11px 1px 0 6px; background: #dcdee0; }
.organize { padding: 2px 7px 0 3px; }
.create { padding: 2px 8px 0 3px; }
.create .smalls { padding-left: 4px; }
.open { padding: 2px 10px 0 3px; }
.smalls.tall { padding: 0 0 0 4px; }
.tall .small { height: 25px; }
.select .smalls { padding: 0; }

/* Address bar */
.addressrow {
  display: flex;
  align-items: center;
  height: 46px;
  padding: 0 13px 4px;
  border-bottom: 1px solid #bdbdbd;
}
.nav-btn { width: 14px; height: 30px; }
.nav-btn + .nav-btn { margin-left: 16px; }
.recent { width: 14px; margin-left: 9px; }
.up { width: 14px; margin-left: 7px; margin-right: 6px; }
.address {
  display: flex;
  flex: 1;
  align-items: center;
  min-width: 0;
  height: 31px;
  margin-right: 12px;
  padding-left: 3px;
  border: 1px solid #d9d9d9;
}
.crumbs { display: flex; flex: 1; }
.crumbs li { display: flex; align-items: center; white-space: nowrap; }
.chev { width: 8px; height: 8px; margin: 0 9px; color: #777; }
.crumbs li:first-child .chev { margin-left: 4px; }
.history { width: 29px; height: 29px; }
.refresh { width: 31px; height: 29px; border-left: 1px solid #d9d9d9; }
.search {
  display: flex;
  align-items: center;
  gap: 13px;
  width: 106px;
  height: 31px;
  padding-left: 13px;
  border: 1px solid #d9d9d9;
}
.search input { width: 100%; min-width: 0; flex: 1; outline: 0; }
.search input::placeholder { color: #707070; opacity: 1; }

/* Content columns */
.content {
  display: grid;
  grid-template-columns: 278px 241px 230px minmax(0, 1fr);
  flex: 1;
  min-height: 0;
}
.tree { padding: 16px 2px 0 1px; border-right: 1px solid #f0f0f0; }
.tree a { display: flex; align-items: center; gap: 5px; height: 24px; padding-left: 24px; white-space: nowrap; }
.tree .gap { margin-top: 8px; }
.tree .child { padding-left: 32px; }
.tree .current { background: #d9d9d9; }

.files { display: flex; flex-direction: column; min-width: 0; min-height: 0; }
.colhead {
  position: relative;
  justify-content: flex-start;
  height: 28px;
  margin-bottom: 5px;
  padding-left: 18px;
  color: #4b6584;
}
.sort { position: absolute; top: 0; left: 138px; }
.list { flex: 1; min-height: 0; overflow: hidden; }
.list li { display: flex; align-items: center; gap: 3px; height: 21px; white-space: nowrap; }
.files .list li { padding-left: 20px; }
.marked { position: relative; }
.redline { position: absolute; left: 14px; top: 18px; width: 122px; height: 8px; z-index: 1; }

.hscroll { display: flex; height: 16px; background: #f0f0f0; }
.hscroll .plain { width: 18px; }
.track { flex: 1; }
.thumb { width: 39%; height: 16px; background: #cdcdcd; }

.usb {
  position: relative;
  display: flex;
  flex-direction: column;
  min-width: 0;
  min-height: 0;
  border-left: 1px solid #d4e2f4;
}
.usb-head, .usb-space {
  display: flex;
  align-items: center;
  height: 26px;
  padding-left: 8px;
  border: solid #d4e2f4;
  border-width: 1px 0 0;
  background: #f4f8fd;
  font-size: 13px;
}
.usb-head .i16 { margin-left: auto; margin-right: 7px; }
.safe { padding-right: 4px; color: #0cae4b; }
.usb-space { height: 27px; border-bottom-width: 1px; }
.gear { width: 31px; height: 25px; margin-left: auto; padding-left: 9px; border-left: 1px solid #d4e2f4; }
.usb-body { display: flex; flex: 1; min-height: 0; }
.usb-body .list { padding-top: 2px; margin-right: 5px; border-right: 1px solid #e4edf8; }
.usb-body .list li { padding-left: 23px; gap: 2px; }
.vscroll { width: 5px; margin-right: 1px; padding-top: 19px; background: #f0f0f0; }
.vthumb { height: 139px; background: #cdcdcd; }
.collapse {
  position: absolute;
  top: 265px;
  left: -1px;
  display: flex;
  align-items: center;
  justify-content: center;
  width: 16px;
  height: 50px;
  border: 2px solid #d4e2f4;
  border-left-width: 1px;
  background: #f4f8fd;
}
.preview { display: flex; align-items: center; justify-content: center; color: #6d6d6d; }

/* Status bar */
.status { position: relative; display: flex; align-items: center; height: 24px; padding: 0 5px 0 15px; }
.count { margin-right: auto; color: #1e395b; }
.view { display: flex; align-items: center; justify-content: center; width: 22px; height: 23px; }
.view.on { border: 1px solid #26a0da; background: #cce8f6; }
.watermark {
  position: absolute;
  right: 0;
  bottom: 4px;
  color: #f0f0f0;
  font: 16px/20px "Liberation Sans", sans-serif;
  text-shadow: 1px 1px 1px #c9c9c9;
  opacity: .7;
  pointer-events: none;
}

/* Window edge behind */
.behind {
  display: flex;
  flex-direction: column;
  overflow: hidden;
  background: linear-gradient(90deg, #c7c8ca, #e4e5e7);
}
.strip { height: 2px; }
.blue { margin-top: 4px; background: #0f74c4; }
.top { margin-top: 20px; background: #b9bbcc; }
.glyph { height: 16px; margin: auto 0 37px; color: #0a800a; text-indent: -6px; white-space: nowrap; }
.mid { height: 9px; background: #a5a6b0; }
.low { height: 8px; margin: 4px 0 91px; background: #b5b8ca; }
```
